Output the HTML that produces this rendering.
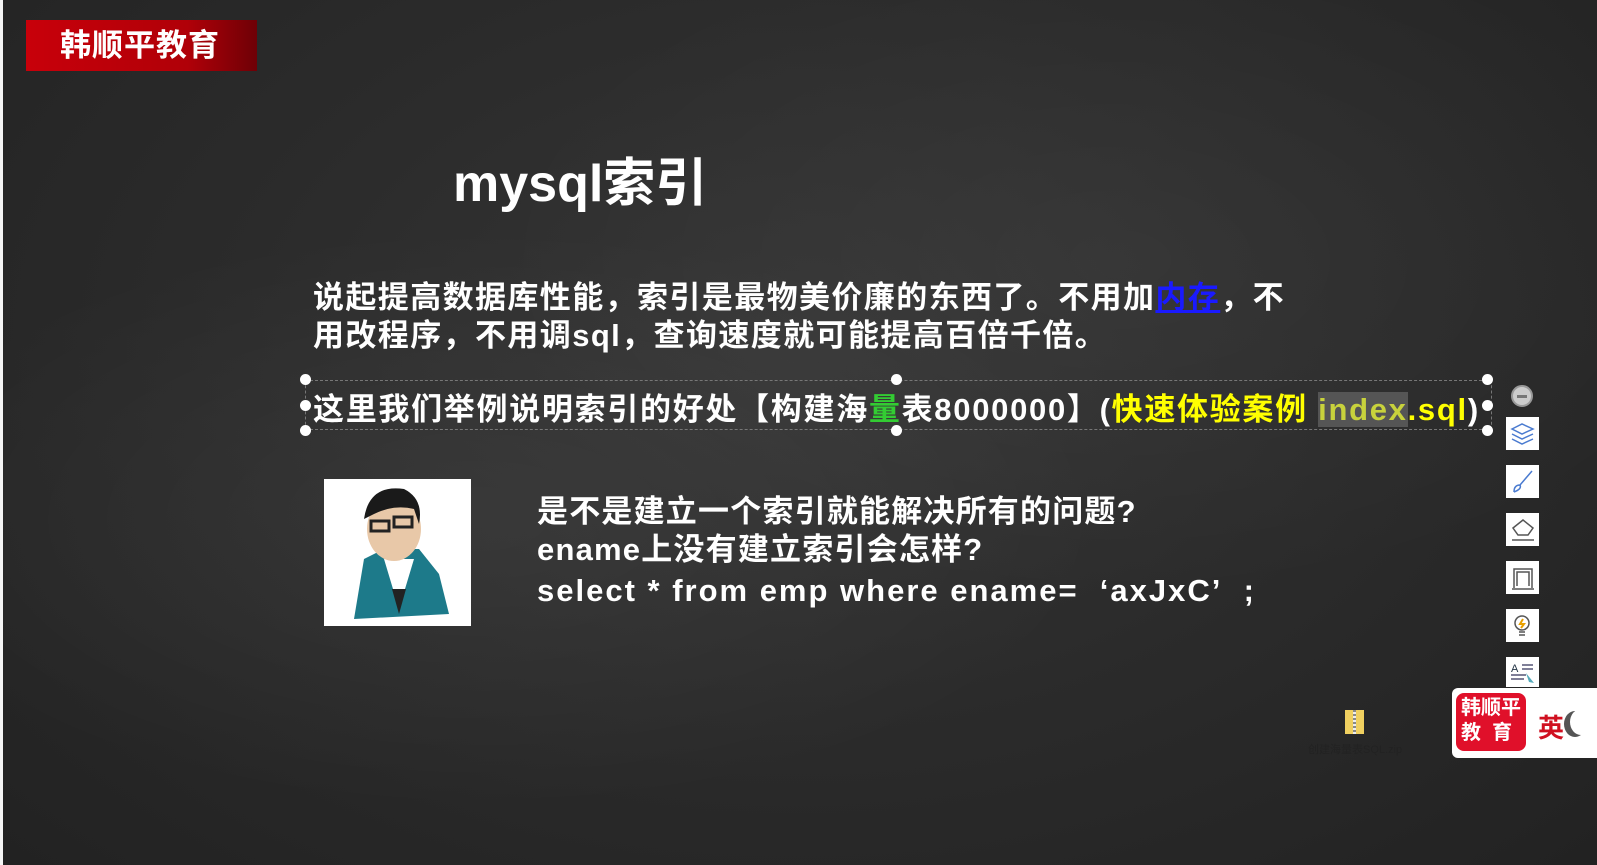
<!DOCTYPE html>
<html><head><meta charset="utf-8"><style>
*{margin:0;padding:0;box-sizing:border-box}
body{width:1597px;height:865px;overflow:hidden;position:relative;background:#2a2a2a;
background-image:radial-gradient(ellipse at 30% 60%,rgba(255,255,255,0.05),transparent 40%),radial-gradient(ellipse at 70% 30%,rgba(255,255,255,0.04),transparent 40%),radial-gradient(ellipse at 50% 40%,#353535 0%,#2b2b2b 50%,#222 100%);
font-family:"Liberation Sans","Noto Sans CJK SC",sans-serif;color:#fff}
.abs{position:absolute}
.logo{left:26px;top:20px;width:231px;height:51px;background:linear-gradient(90deg,#c8000a 0%,#b00008 70%,#6e0006 100%);font-size:31px;font-weight:bold;line-height:51px;text-align:left;padding-left:34px;letter-spacing:1px}
.title{left:453px;top:141px;font-size:52px;font-weight:bold}
.p{left:313px;font-size:31px;font-weight:bold;white-space:nowrap;letter-spacing:1.4px}
.q{left:537px;font-size:31px;font-weight:bold;white-space:nowrap;letter-spacing:1.2px}
.dot{width:11px;height:11px;border-radius:50%;background:#fff}
.tb{left:1506px;width:33px;height:33px;background:#fff}
</style></head><body>
<div class="abs" style="left:0;top:0;width:3px;height:865px;background:#f5f5f5"></div>
<div class="abs logo">韩顺平教育</div>
<div class="abs title">mysql索引</div>
<div class="abs p" style="top:272px">说起提高数据库性能，索引是最物美价廉的东西了。不用加<span style="color:#1a1aff;text-decoration:underline">内存</span>，不</div>
<div class="abs p" style="top:310px">用改程序，不用调sql，查询速度就可能提高百倍千倍。</div>
<div class="abs" style="left:305px;top:380px;width:1187px;height:50px;border:1px dashed #777"></div>
<div class="abs dot" style="left:300px;top:374px"></div><div class="abs dot" style="left:300px;top:400px"></div><div class="abs dot" style="left:300px;top:425px"></div>
<div class="abs dot" style="left:891px;top:374px"></div><div class="abs dot" style="left:891px;top:425px"></div>
<div class="abs dot" style="left:1482px;top:374px"></div><div class="abs dot" style="left:1482px;top:400px"></div><div class="abs dot" style="left:1482px;top:425px"></div>
<div class="abs p" style="top:384px;letter-spacing:1.7px">这里我们举例说明索引的好处【构建海<span style="color:#3c3">量</span>表8000000】(<span style="color:#ff0">快速体验案例 <span style="background:#555;color:#c8d23c">index</span>.sql</span>)</div>
<div class="abs" style="left:324px;top:479px;width:147px;height:147px;background:#fff">
<svg width="147" height="147" viewBox="0 0 147 147"><path d="M30 140 L40 80 L60 70 L95 70 L115 95 L125 135 Z" fill="#1d7a8a"/><path d="M60 80 L75 130 L90 80 Z" fill="#fff"/><path d="M68 110 L75 135 L82 110 Z" fill="#222"/><ellipse cx="70" cy="50" rx="27" ry="32" fill="#e8c8a8"/><path d="M40 40 Q45 5 80 10 Q100 20 95 45 L90 30 Q70 25 50 35 Z" fill="#1a1a1a"/><rect x="47" y="42" width="18" height="10" fill="none" stroke="#222" stroke-width="3"/><rect x="70" y="38" width="18" height="10" fill="none" stroke="#222" stroke-width="3"/></svg></div>
<div class="abs q" style="top:486px">是不是建立一个索引就能解决所有的问题?</div>
<div class="abs q" style="top:524px">ename上没有建立索引会怎样?</div>
<div class="abs q" style="top:573px;letter-spacing:2px">select * from emp where ename=&nbsp;&nbsp;‘axJxC’&nbsp;&nbsp;;</div>
<div class="abs" style="left:1511px;top:385px;width:22px;height:22px;border-radius:50%;background:#ccc;border:2px solid #999"><div style="margin:8px 4px;height:3px;background:#777"></div></div>
<div class="abs tb" style="top:417px"><svg width="33" height="33"><path d="M6 12 L16 7 L27 12 L16 17 Z M6 17 L16 22 L27 17 M6 22 L16 27 L27 22" fill="none" stroke="#4a7bd0" stroke-width="1.5"/></svg></div>
<div class="abs tb" style="top:465px"><svg width="33" height="33"><path d="M26 6 L14 20 M8 27 Q8 20 14 20 Q16 24 8 27" fill="none" stroke="#4a7bd0" stroke-width="1.5"/></svg></div>
<div class="abs tb" style="top:513px"><svg width="33" height="33"><path d="M7 15 L17 7 L27 15 L22 22 L12 22 Z M6 27 L28 27" fill="none" stroke="#555" stroke-width="1.5"/></svg></div>
<div class="abs tb" style="top:561px"><svg width="33" height="33"><path d="M8 27 L8 8 L26 8 L26 27 M11 25 L11 11 L23 11 L23 25 M6 28 L28 28" fill="none" stroke="#555" stroke-width="1.5"/></svg></div>
<div class="abs tb" style="top:609px"><svg width="33" height="33"><circle cx="16" cy="14" r="7" fill="none" stroke="#555" stroke-width="1.5"/><path d="M17 10 L14 15 L18 15 L15 19" stroke="#e8a000" stroke-width="2" fill="none"/><path d="M13 23 L19 23 M13 26 L19 26" stroke="#555" stroke-width="1.5"/></svg></div>
<div class="abs tb" style="top:657px;height:30px"><svg width="33" height="30"><text x="5" y="15" font-size="11" fill="#234" font-family="Liberation Sans">A</text><path d="M5 18 L20 18 M5 22 L18 22 M16 8 L27 8 M16 12 L27 12" stroke="#557" stroke-width="1.5"/><path d="M20 16 L28 26 L23 25 Z" fill="#5ab" /></svg></div>
<div class="abs" style="left:1452px;top:688px;width:145px;height:70px;background:#fff;border-radius:6px 0 0 6px"></div>
<div class="abs" style="left:1456px;top:693px;width:70px;height:58px;background:#e0102a;border-radius:8px;color:#fff;font-size:20px;line-height:25px;padding:3px 5px;font-weight:bold">韩顺平<br>教&nbsp;&nbsp;育</div>
<div class="abs" style="left:1538px;top:708px;font-size:26px;color:#d01020;font-weight:bold">英</div>
<div class="abs" style="left:1570px;top:709px;width:22px;height:26px;border-radius:50%;box-shadow:-6px 2px 0 0 #555"></div>
<div class="abs" style="left:1345px;top:710px;width:19px;height:24px;background:#f0d060"><div style="margin-left:8px;width:3px;height:24px;background:repeating-linear-gradient(#888 0 2px,#eee 2px 4px)"></div></div>
<div class="abs" style="left:1308px;top:741px;font-size:11px;color:#222">创建海量表SQL.zip</div>
</body></html>
